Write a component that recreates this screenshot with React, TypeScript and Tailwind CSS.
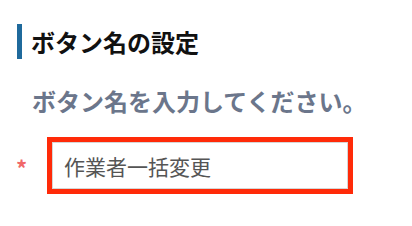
import React from "react";

export default function App() {
  return (
    <div
      className="w-[412px] h-[226px] bg-white overflow-hidden"
      style={{ fontFamily: '"Noto Sans CJK JP", "Noto Sans", sans-serif' }}
    >
      <div className="pt-[24px] pl-[17px]">
        <div className="flex items-center h-[35px] border-l-[5px] border-[#1f6a9c] pl-[9px] text-[24px] leading-none font-bold text-[#111]">
          ボタン名の設定
        </div>
      </div>
      <div className="mt-[24px] pl-[32px] h-[36px] flex items-center text-[24px] leading-none font-bold text-[#6b768b]">
        ボタン名を入力してください。
      </div>
      <div className="mt-[18px] flex items-start">
        <div className="w-[47px] pl-[16px] pt-[19px] text-[22px] leading-none font-bold text-[#f06868]">
          *
        </div>
        <div className="border-[5px] border-[#ff2a08]">
          <input
            readOnly
            value="作業者一括変更"
            className="block w-[296px] h-[47px] border border-[#d6d6d6] bg-white pl-[11px] text-[21px] text-[#555] outline-none"
            style={{ fontFamily: '"Noto Sans CJK JP", "Noto Sans", sans-serif' }}
          />
        </div>
      </div>
    </div>
  );
}
